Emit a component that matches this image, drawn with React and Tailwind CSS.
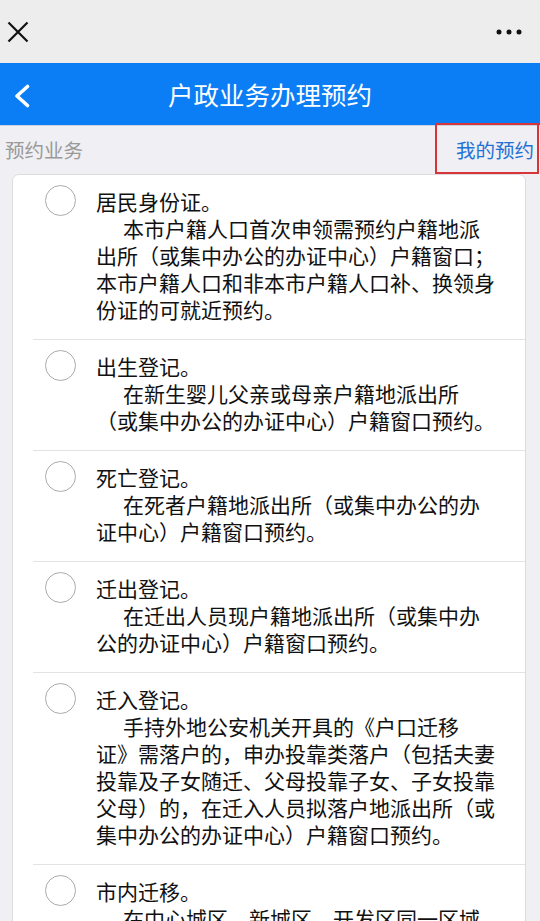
import React from "react";

const items = [
  {
    title: "居民身份证。",
    desc: "本市户籍人口首次申领需预约户籍地派出所（或集中办公的办证中心）户籍窗口；本市户籍人口和非本市户籍人口补、换领身份证的可就近预约。",
  },
  {
    title: "出生登记。",
    desc: "在新生婴儿父亲或母亲户籍地派出所（或集中办公的办证中心）户籍窗口预约。",
  },
  {
    title: "死亡登记。",
    desc: "在死者户籍地派出所（或集中办公的办证中心）户籍窗口预约。",
  },
  {
    title: "迁出登记。",
    desc: "在迁出人员现户籍地派出所（或集中办公的办证中心）户籍窗口预约。",
  },
  {
    title: "迁入登记。",
    desc: "手持外地公安机关开具的《户口迁移证》需落户的，申办投靠类落户（包括夫妻投靠及子女随迁、父母投靠子女、子女投靠父母）的，在迁入人员拟落户地派出所（或集中办公的办证中心）户籍窗口预约。",
  },
  {
    title: "市内迁移。",
    desc: "在中心城区、新城区、开发区同一区域内迁移的，在迁入地派出所（或集中办公的办证中心）户籍窗口预约。",
  },
];

function TopBar() {
  return (
    <div className="h-[63px] bg-[#ededed] flex items-center justify-between pl-[7px] pr-[18px]">
      <svg width="22" height="22" viewBox="0 0 22 22">
        <path d="M1.5 1.5 L20.5 20.5 M20.5 1.5 L1.5 20.5" stroke="#111" strokeWidth="2.2" />
      </svg>
      <svg width="26" height="6" viewBox="0 0 26 6">
        <circle cx="3" cy="3" r="2.5" fill="#111" />
        <circle cx="13" cy="3" r="2.5" fill="#111" />
        <circle cx="23" cy="3" r="2.5" fill="#111" />
      </svg>
    </div>
  );
}

function Header() {
  return (
    <div className="relative h-[63px] bg-[#0b7df5] flex items-center justify-center border-b border-[#c9d3e0]">
      <svg className="absolute left-[13px] top-[21px]" width="18" height="24" viewBox="0 0 18 24">
        <path d="M14.5 2.5 L4 12 L14.5 21.5" fill="none" stroke="#fff" strokeWidth="3.6" strokeLinecap="round" strokeLinejoin="round" />
      </svg>
      <div className="text-white text-[25.5px] leading-none">户政业务办理预约</div>
    </div>
  );
}

function Item({ title, desc, last }) {
  return (
    <div className={"ml-[20px] flex pt-[13px] pb-[16px] " + (last ? "" : "border-b border-[#e3e3e3]")}>
      <div className="w-[63px] shrink-0 pl-[12px]">
        <div className="-mt-[3px] w-[31px] h-[31px] rounded-full border-[1.5px] border-[#ababab] bg-white" />
      </div>
      <div className="w-[402px] text-[21px] leading-[27px] text-[#111] [text-spacing-trim:space-all]">
        <div>{title}</div>
        <div className="indent-[27px]">{desc}</div>
      </div>
    </div>
  );
}

export default function App() {
  return (
    <div
      className="relative min-h-[921px] bg-[#efeff4]"
      style={{ fontFamily: '"Noto Sans CJK SC", "Noto Sans", sans-serif' }}
    >
      <TopBar />
      <Header />
      <div className="h-[48px] flex items-center justify-between pl-[5px] pr-[6px]">
        <span className="text-[19.5px] text-[#9a9a9a]">预约业务</span>
        <span className="text-[19.5px] text-[#1f71d6]">我的预约</span>
      </div>
      <div className="absolute left-[435px] top-[123px] w-[104px] h-[51px] border-2 border-[#d8353a]" />
      <div className="ml-[12px] mr-[14px] bg-white border border-[#dcdcdc] rounded-[7px]">
        {items.map((it, i) => (
          <Item key={i} title={it.title} desc={it.desc} last={i === items.length - 1} />
        ))}
      </div>
    </div>
  );
}
